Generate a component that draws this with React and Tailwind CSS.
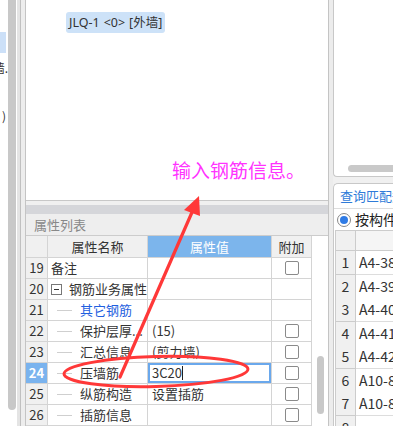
const rows = [
  { n: 19, name: '备注', check: true },
  { n: 20, name: '钢筋业务属性', group: true },
  { n: 21, name: '其它钢筋', child: true, blue: true },
  { n: 22, name: '保护层厚...', value: '(15)', child: true, check: true },
  { n: 23, name: '汇总信息', value: '(剪力墙)', child: true, check: true },
  { n: 24, name: '压墙筋', value: '3C20', child: true, check: true, active: true },
  { n: 25, name: '纵筋构造', value: '设置插筋', child: true, check: true },
  { n: 26, name: '插筋信息', child: true, check: true },
];

const codes = ['A4-38', 'A4-39', 'A4-40', 'A4-41', 'A4-42', 'A10-8', 'A10-8', ''];

function CheckBox() {
  return <span className="block w-[14px] h-[14px] rounded-[2px] border border-[#8a8a8a] bg-white" />;
}

function PropRow({ row }) {
  return (
    <div className="grid grid-cols-[22px_100px_124px_40px] h-[21px] text-[13px] leading-[20px] text-[#333]">
      <div
        className={
          row.active
            ? 'border-r border-b border-[#d4d4d4] bg-[#7ab3ee] text-white font-bold text-center'
            : 'border-r border-b border-[#d4d4d4] bg-[#f0f0f0] text-center'
        }
      >
        {row.n}
      </div>
      <div className="border-r border-b border-[#d4d4d4] bg-white flex items-center whitespace-nowrap overflow-hidden">
        {row.group && (
          <span className="ml-[3px] mr-[7px] w-[11px] h-[11px] border border-[#777] flex items-center justify-center">
            <span className="w-[5px] h-[1px] bg-[#333]" />
          </span>
        )}
        {row.child && <span className="ml-[9px] mr-[8px] w-[15px] h-[1px] bg-[#cfcfcf]" />}
        {!row.group && !row.child && <span className="w-[3px]" />}
        <span className={row.blue ? 'text-[#1f5fe0]' : ''}>{row.name}</span>
      </div>
      <div className="border-r border-b border-[#d4d4d4] bg-white whitespace-nowrap overflow-hidden">
        {row.active ? (
          <div className="h-full border-2 border-[#6aa8ec] flex items-center pl-[2px]">
            <span>{row.value}</span>
            <span className="w-[1px] h-[14px] bg-[#222]" />
          </div>
        ) : (
          <span className="pl-[4px]">{row.value}</span>
        )}
      </div>
      <div className="border-r border-b border-[#d4d4d4] bg-white flex items-center justify-center">
        {row.check && <CheckBox />}
      </div>
    </div>
  );
}

export default function App() {
  return (
    <div className="relative w-[393px] h-[426px] overflow-hidden bg-[#f0f0f0] flex font-['Noto_Sans_CJK_SC','Noto_Sans',sans-serif]">
      {/* left remnant panel */}
      <div className="w-[8px] h-full bg-white overflow-hidden flex flex-col text-[12px] text-[#333]">
        <div className="mt-[32px] h-[21px] w-[6px] bg-[#cce0f8]" />
        <div className="mt-[8px] h-[14px] leading-[14px] flex justify-end whitespace-nowrap">墙.</div>
        <div className="mt-[34px] h-[14px] leading-[14px] flex justify-end whitespace-nowrap pr-[2px]">)</div>
      </div>
      <div className="w-[9px] h-full bg-white">
        <div className="h-[410px] w-[8px] bg-[#c8c8c8] rounded-b-full" />
      </div>
      <div className="w-[8px] h-full flex">
        <div className="w-[3px] bg-[#e4e4e4]" />
        <div className="w-[1px] bg-[#c0c0c0]" />
        <div className="w-[4px] bg-[#ededed]" />
      </div>

      {/* main panel */}
      <div className="w-[303px] h-full flex flex-col border-l border-[#c4c4c4]">
        <div className="h-[202px] bg-white border-b border-[#c8c8c8] pt-[8px] pl-[40px]">
          <div className="inline-flex items-center gap-[4px] h-[21px] px-[3px] rounded-[3px] bg-[#cde2f8] text-[12.5px] leading-[21px] text-[#333] whitespace-nowrap font-['Noto_Sans','Noto_Sans_CJK_SC',sans-serif]">
            <span>JLQ-1</span>
            <span>&lt;0&gt;</span>
            <span>[外墙]</span>
          </div>
        </div>
        <div className="h-[4px] bg-[#f0f0f0]" />
        <div className="h-[9px] bg-[#d5d6da]" />
        <div className="h-[22px] bg-[#eeeeee] border-b border-[#cccccc] pl-[8px] text-[13px] leading-[21px] text-[#888]">
          属性列表
        </div>
        <div className="flex-1 flex bg-white">
          <div className="w-[286px] flex flex-col">
            <div className="grid grid-cols-[22px_100px_124px_40px] h-[22px] text-[13px] leading-[21px] text-[#333] text-center">
              <div className="border-r border-b border-[#d4d4d4] bg-[#f0f0f0]" />
              <div className="border-r border-b border-[#d4d4d4] bg-[#f0f0f0]">属性名称</div>
              <div className="border-r border-b border-[#d4d4d4] bg-[#7cb5ec] text-white">属性值</div>
              <div className="border-r border-b border-[#d4d4d4] bg-[#f0f0f0]">附加</div>
            </div>
            {rows.map((row) => (
              <PropRow key={row.n} row={row} />
            ))}
          </div>
          <div className="w-[16px] flex flex-col items-center pt-[120px]">
            <div className="w-[7px] h-[58px] rounded-full bg-[#c8c8c8]" />
          </div>
        </div>
      </div>

      {/* splitter */}
      <div className="w-[5px] h-full border-l border-[#c4c4c4] bg-[#ececec]" />

      {/* right panel */}
      <div className="w-[60px] h-full flex flex-col">
        <div className="h-[177px] bg-white border-l border-b border-[#c8c8c8] rounded-bl-[4px] flex flex-col justify-end pb-[4px] pl-[14px]">
          <div className="h-[7px] w-[60px] rounded-full bg-[#c9c9c9]" />
        </div>
        <div className="h-[6px]" />
        <div className="flex-1 bg-white border-l border-t border-[#c8c8c8] rounded-tl-[5px] flex flex-col overflow-hidden">
          <div className="h-[25px] border-b border-[#dddddd] pl-[6px] text-[13px] leading-[24px] text-[#2f7bd8] whitespace-nowrap">
            查询匹配规则
          </div>
          <div className="h-[23px] flex items-center pl-[3px] gap-[4px] text-[14px] text-[#222] whitespace-nowrap">
            <span className="w-[14px] h-[14px] shrink-0 rounded-full border border-[#888] flex items-center justify-center">
              <span className="w-[8px] h-[8px] rounded-full bg-[#2f7be5]" />
            </span>
            按构件类型
          </div>
          <div className="ml-[1px] border-l border-t border-[#cccccc] flex flex-col">
            <div className="grid grid-cols-[20px_60px] h-[20px]">
              <div className="bg-[#f0f0f0] border-r border-b border-[#cccccc]" />
              <div className="bg-[#f5f5f5] border-b border-[#cccccc]" />
            </div>
            {codes.map((c, i) => (
              <div key={i} className="grid grid-cols-[20px_60px] h-[23.5px] text-[14px] leading-[23px] text-[#333]">
                <div className="bg-[#f0f0f0] border-r border-b border-[#cccccc] text-center">{i + 1}</div>
                <div className="bg-white border-b border-[#dddddd] pl-[3px] whitespace-nowrap">{c}</div>
              </div>
            ))}
          </div>
        </div>
      </div>

      {/* annotations */}
      <div className="absolute left-[172px] top-[158px] text-[19px] leading-[24px] text-[#ff33ff] whitespace-nowrap">
        输入钢筋信息。
      </div>
      <svg className="absolute left-0 top-0 pointer-events-none" width="393" height="426" viewBox="0 0 393 426">
        <line x1="120" y1="377" x2="193" y2="210" stroke="#ff3838" strokeWidth="3.2" strokeLinecap="round" />
        <polygon points="199,196 184,210 200,216" fill="#ff3838" />
        <ellipse cx="156" cy="371.5" rx="92" ry="15" fill="none" stroke="#ff3838" strokeWidth="3" transform="rotate(-1.5 156 371.5)" />
      </svg>
    </div>
  );
}
